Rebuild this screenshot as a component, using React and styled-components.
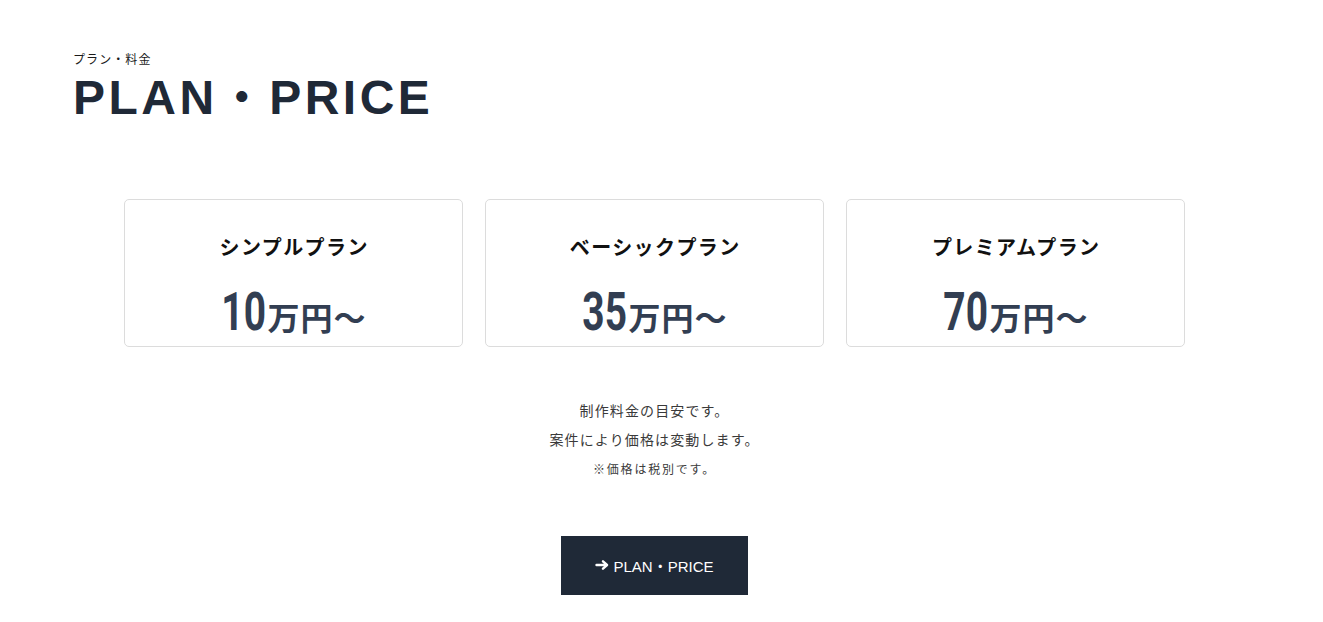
import React from "react";
import styled, { createGlobalStyle } from "styled-components";

const GlobalStyle = createGlobalStyle`
  * { box-sizing: border-box; }
  html, body { margin: 0; padding: 0; background: #ffffff; }
  body {
    font-family: "Liberation Sans", "Noto Sans CJK JP", sans-serif;
    color: #333333;
  }
`;

const Page = styled.main`
  width: calc(100% - 14px);
  padding: 50px 0 27px;
`;

const Header = styled.header`
  padding-left: 73px;
`;

const SubTitle = styled.p`
  margin: 0;
  font-size: 12px;
  line-height: 18px;
  letter-spacing: 0.09em;
  color: #1a1a1a;
  font-family: "Noto Sans CJK JP", sans-serif;
`;

const Title = styled.h2`
  margin: 1px 0 0;
  font-family: "Liberation Sans", "Noto Sans CJK JP", sans-serif;
  font-size: 48px;
  line-height: 58px;
  height: 58px;
  font-weight: 700;
  letter-spacing: 3.5px;
  color: #1f2937;
`;

const Dot = styled.span`
  font-family: "Noto Sans CJK JP", sans-serif;
  font-weight: ${(p) => p.$weight || 400};
  line-height: 0;
`;

const Cards = styled.div`
  display: grid;
  grid-template-columns: repeat(3, 339px);
  gap: 22px;
  justify-content: center;
  margin-top: 72px;
`;

const Card = styled.article`
  height: 148px;
  border: 1px solid #dcdcdc;
  border-radius: 5px;
  background: #fff;
  padding-top: 33px;
  display: flex;
  flex-direction: column;
  align-items: center;
`;

const CardTitle = styled.h3`
  margin: 0;
  font-family: "Noto Sans CJK JP", sans-serif;
  font-size: 20px;
  line-height: 28px;
  font-weight: 700;
  letter-spacing: 1.4px;
  padding-left: 1.4px;
  color: #111111;
`;

const Price = styled.div`
  margin-top: 24px;
  display: flex;
  align-items: baseline;
  color: #323e52;
  line-height: 1;
`;

const Amount = styled.span`
  display: inline-block;
  font-family: "Roboto", sans-serif;
  font-weight: 700;
  font-size: 54px;
  line-height: 1;
  transform: scaleX(0.72);
  transform-origin: right center;
  margin-left: -17px;
  margin-right: 2px;
  letter-spacing: 0;
`;

const Unit = styled.span`
  font-family: "Noto Sans CJK JP", sans-serif;
  font-weight: 700;
  font-size: 32px;
  line-height: 1;
  letter-spacing: 1px;
`;

const Notes = styled.div`
  margin-top: 49px;
  text-align: center;
  font-family: "Noto Sans CJK JP", sans-serif;
  color: #3a3a3a;
`;

const Note = styled.p`
  margin: 0;
  font-size: ${(p) => (p.$small ? "12px" : "14px")};
  line-height: ${(p) => (p.$small ? "30px" : "29px")};
  letter-spacing: ${(p) => (p.$small ? "0.15em" : "0.08em")};
`;

const ButtonRow = styled.div`
  margin-top: 52px;
  display: flex;
  justify-content: center;
`;

const Button = styled.a`
  width: 187px;
  height: 59px;
  display: inline-flex;
  align-items: center;
  justify-content: center;
  gap: 4px;
  background: #1f2937;
  color: #ffffff;
  font-family: "Liberation Sans", "Noto Sans CJK JP", sans-serif;
  font-size: 15px;
  text-decoration: none;
  cursor: pointer;
`;

const ArrowIcon = styled.svg`
  width: 14px;
  height: 10px;
  flex: none;
  margin-top: -1px;
`;

const Arrow = () => (
  <ArrowIcon viewBox="0 0 14 10" fill="none" stroke="#ffffff" strokeWidth="2.4" strokeLinecap="round" strokeLinejoin="round">
    <path d="M1.5 5 H11.5" />
    <path d="M8 1.3 L12 5 L8 8.7" />
  </ArrowIcon>
);

const plans = [
  { name: "シンプルプラン", amount: "10" },
  { name: "ベーシックプラン", amount: "35" },
  { name: "プレミアムプラン", amount: "70" },
];

export default function App() {
  return (
    <>
      <GlobalStyle />
      <Page>
        <Header>
          <SubTitle>プラン・料金</SubTitle>
          <Title>
            PLAN<Dot $weight={500}>・</Dot>PRICE
          </Title>
        </Header>
        <Cards>
          {plans.map((p) => (
            <Card key={p.name}>
              <CardTitle>{p.name}</CardTitle>
              <Price>
                <Amount>{p.amount}</Amount>
                <Unit>万円〜</Unit>
              </Price>
            </Card>
          ))}
        </Cards>
        <Notes>
          <Note>制作料金の目安です。</Note>
          <Note>案件により価格は変動します。</Note>
          <Note $small>※価格は税別です。</Note>
        </Notes>
        <ButtonRow>
          <Button>
            <Arrow />
            <span>PLAN・PRICE</span>
          </Button>
        </ButtonRow>
      </Page>
    </>
  );
}
